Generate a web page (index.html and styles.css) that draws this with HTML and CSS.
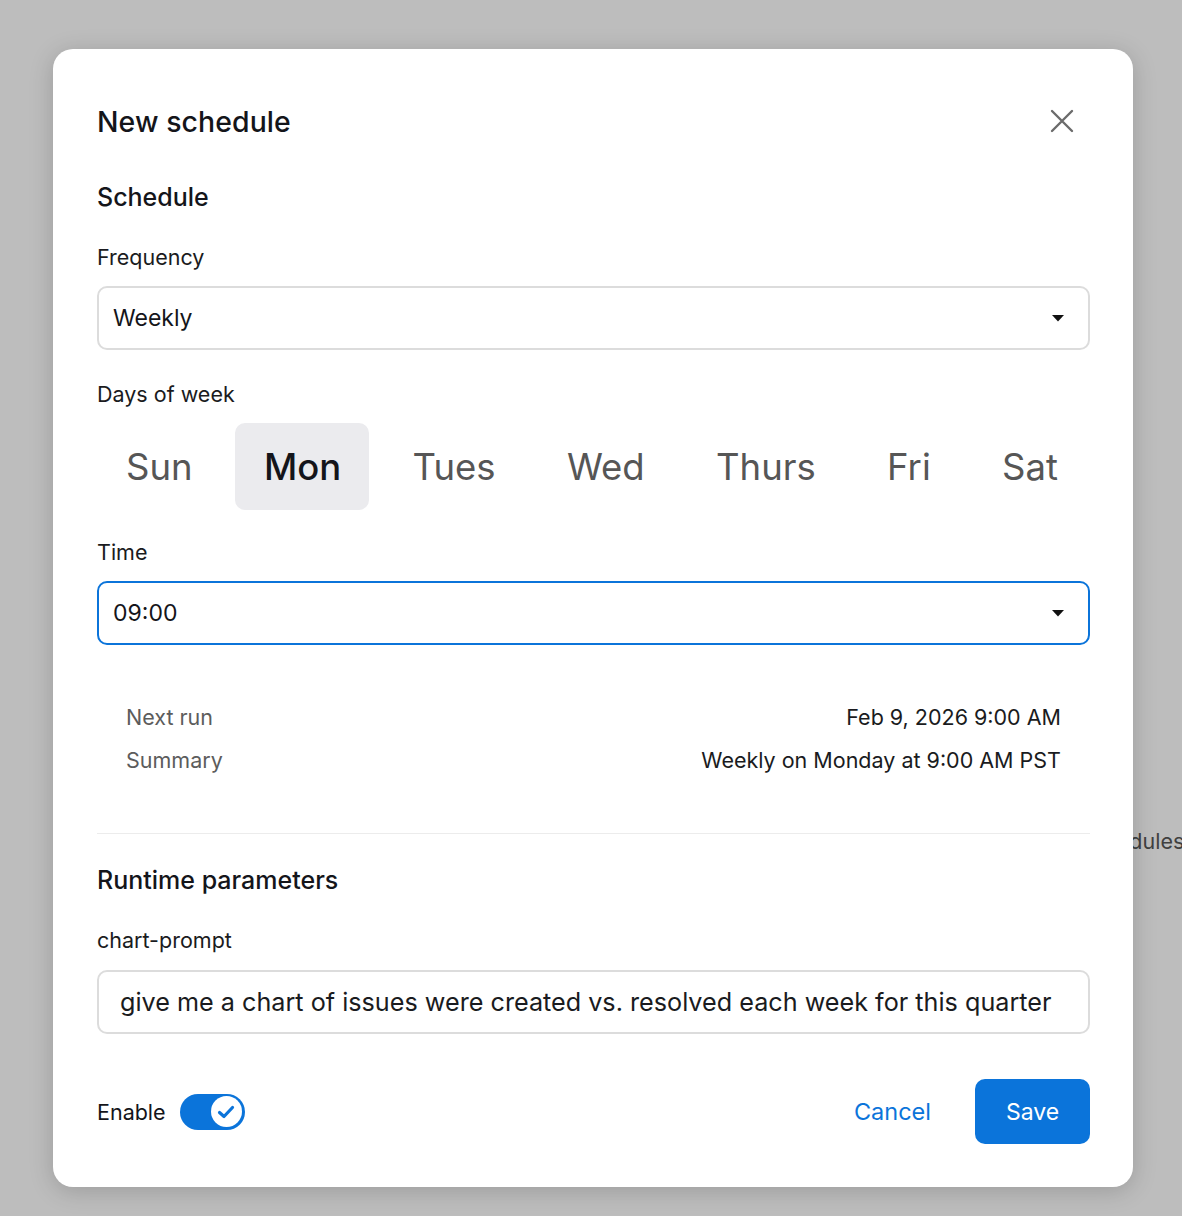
FILE: index.html
```html
<!DOCTYPE html>
<html lang="en">
<head>
<meta charset="utf-8">
<title>New schedule</title>
<link rel="stylesheet" href="styles.css">
</head>
<body>
<div class="backdrop-text">Schedules</div>
<div class="modal">
  <div class="header">
    <h1 class="title">New schedule</h1>
    <button class="close" aria-label="Close">
      <svg width="26" height="26" viewBox="0 0 26 26"><path d="M3 3 L23 23 M23 3 L3 23" stroke="#6b6b6b" stroke-width="2.4" stroke-linecap="round"/></svg>
    </button>
  </div>

  <h2 class="section">Schedule</h2>

  <div class="label">Frequency</div>
  <div class="select">
    <span>Weekly</span>
    <svg class="caret" width="14" height="8" viewBox="0 0 14 8"><path d="M1 1 H13 L7 7.5 Z" fill="#111"/></svg>
  </div>

  <div class="label">Days of week</div>
  <div class="days">
    <button class="day">Sun</button>
    <button class="day active">Mon</button>
    <button class="day">Tues</button>
    <button class="day">Wed</button>
    <button class="day">Thurs</button>
    <button class="day">Fri</button>
    <button class="day">Sat</button>
  </div>

  <div class="label time-label">Time</div>
  <div class="select focused">
    <span>09:00</span>
    <svg class="caret" width="14" height="8" viewBox="0 0 14 8"><path d="M1 1 H13 L7 7.5 Z" fill="#111"/></svg>
  </div>

  <div class="summary">
    <div class="row"><span class="k">Next run</span><span class="v">Feb 9, 2026 9:00 AM</span></div>
    <div class="row"><span class="k">Summary</span><span class="v">Weekly on Monday at 9:00 AM PST</span></div>
  </div>

  <hr class="divider">

  <h2 class="section">Runtime parameters</h2>
  <div class="label">chart-prompt</div>
  <div class="input">give me a chart of issues were created vs. resolved each week for this quarter</div>

  <div class="footer">
    <div class="enable">
      <span>Enable</span>
      <span class="toggle">
        <span class="knob">
          <svg width="22" height="22" viewBox="0 0 22 22"><path d="M4.5 11.5 L9 15.5 L17.5 6.5" fill="none" stroke="#0b74da" stroke-width="3.2" stroke-linecap="round" stroke-linejoin="round"/></svg>
        </span>
      </span>
    </div>
    <div class="actions">
      <button class="cancel">Cancel</button>
      <button class="save">Save</button>
    </div>
  </div>
</div>
</body>
</html>
```
FILE: styles.css
```css
* { box-sizing: border-box; }
html, body { margin: 0; padding: 0; }
body {
  background: #bdbdbd;
  font-family: Inter, "Noto Sans", sans-serif;
  color: #14151a;
  width: 1182px;
  height: 1216px;
  overflow: hidden;
  position: relative;
  padding: 49px 0 0 53px;
}
.backdrop-text {
  position: absolute;
  left: 1078px;
  top: 828px;
  font-size: 21.5px;
  color: #404040;
}
.modal {
  position: relative;
  width: 1080px;
  height: 1138px;
  background: #fff;
  border-radius: 20px;
  box-shadow: 0 4px 24px rgba(0,0,0,0.18);
  padding: 44px 43px 0 44px;
  display: flex;
  flex-direction: column;
}
.header {
  display: flex;
  justify-content: space-between;
  align-items: center;
  height: 56px;
}
.title {
  margin: 0;
  font-size: 28.4px;
  font-weight: 500;
  letter-spacing: 0.1px;
}
.close {
  border: 0;
  background: none;
  padding: 0;
  margin-right: 15px;
  display: flex;
}
.section {
  margin: 32px 0 0;
  font-size: 25px;
  font-weight: 500;
  line-height: 32px;
}
.label {
  font-size: 21.5px;
  line-height: 28px;
  margin-top: 30px;
  color: #1a1b20;
}
.time-label { margin-top: 28px; }
.select {
  margin-top: 15px;
  height: 64px;
  border: 2px solid #dcdcdc;
  border-radius: 10px;
  display: flex;
  align-items: center;
  justify-content: space-between;
  padding: 0 23px 0 14px;
  font-size: 23px;
}
.select.focused {
  border-color: #0b74da;
}
.caret { display: block; }
.days {
  margin-top: 15px;
  display: flex;
  justify-content: space-between;
  margin-right: 4px;
}
.day {
  border: 0;
  background: none;
  font-family: inherit;
  font-size: 36.5px;
  color: #565656;
  height: 87px;
  padding: 0 28px 0 29px;
  border-radius: 10px;
}
.day.active {
  background: #ebebee;
  color: #14151a;
  font-weight: 500;
}
.summary {
  margin-top: 58px;
  padding: 0 29px;
  display: flex;
  flex-direction: column;
  gap: 15px;
}
.row {
  display: flex;
  justify-content: space-between;
  font-size: 21.5px;
  line-height: 28px;
}
.row .k { color: #5c5c5c; }
.row .v { color: #1a1b20; }
.divider {
  border: 0;
  border-top: 1px solid #ececec;
  margin: 59px 0 0;
  width: 993px;
}
.divider + .section { margin-top: 30px; }
.input {
  margin-top: 16px;
  height: 64px;
  border: 2px solid #dcdcdc;
  border-radius: 10px;
  display: flex;
  align-items: center;
  padding: 0 21px;
  font-size: 25.2px;
  color: #1a1b20;
  white-space: nowrap;
}
.footer {
  margin-top: 45px;
  display: flex;
  justify-content: space-between;
  align-items: center;
}
.enable {
  display: flex;
  align-items: center;
  gap: 14px;
  font-size: 21.5px;
}
.toggle {
  width: 65px;
  height: 36px;
  border-radius: 18px;
  background: #0b74da;
  display: flex;
  align-items: center;
  justify-content: flex-end;
  padding-right: 3px;
}
.knob {
  width: 31px;
  height: 31px;
  border-radius: 50%;
  background: #fff;
  display: flex;
  align-items: center;
  justify-content: center;
}
.actions {
  display: flex;
  align-items: center;
  gap: 22px;
}
.cancel {
  border: 0;
  background: none;
  font-family: inherit;
  font-size: 23.5px;
  color: #0b74da;
  padding: 0 22px;
  height: 65px;
}
.save {
  border: 0;
  background: #0b74da;
  color: #fff;
  font-family: inherit;
  font-size: 23px;
  width: 115px;
  height: 65px;
  border-radius: 10px;
}
```
